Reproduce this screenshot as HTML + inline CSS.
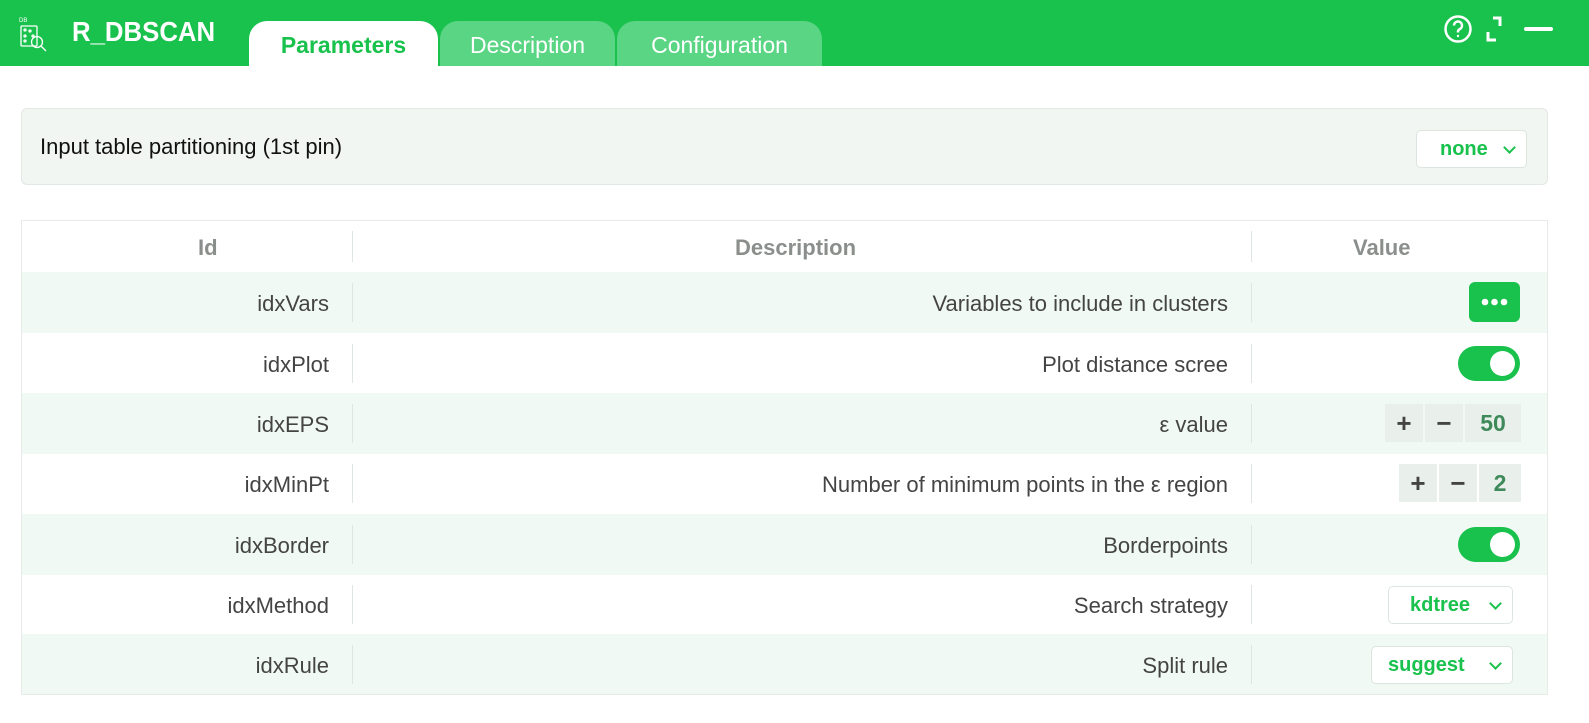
<!DOCTYPE html>
<html><head><meta charset="utf-8"><style>
*{box-sizing:border-box;margin:0;padding:0}
body{width:1589px;height:723px;background:#fff;font-family:"Liberation Sans",sans-serif;position:relative;overflow:hidden}
.top{position:absolute;left:0;top:0;width:1589px;height:66px;background:#19c14d}
.title{position:absolute;left:72px;top:15px;color:#fff;font-weight:bold;font-size:28px;line-height:34px;transform:scaleX(0.92);transform-origin:left}
.tab{position:absolute;top:21px;height:45px;border-radius:18px 18px 0 0;font-size:23px;text-align:center;line-height:48px;color:#fff;background:#5ad584}
.tab.act{background:#fff;color:#19c14d;font-weight:bold}
.box{position:absolute;left:21px;top:108px;width:1527px;height:77px;background:#f2f6f3;border:1px solid #e2e8e4;border-radius:6px}
.box span{position:absolute;left:18px;top:0;line-height:76px;font-size:22px;color:#111}
.sel{position:absolute;background:#fff;border:1px solid #dde5df;border-radius:5px;color:#19c14d;font-weight:bold;font-size:20px;line-height:36px}
.sel i{position:absolute;right:12px;top:12px;width:9px;height:9px;border-right:2px solid #19c14d;border-bottom:2px solid #19c14d;transform:rotate(45deg)}
.tbl{position:absolute;left:21px;top:220px;width:1527px;height:475px;border:1px solid #e6ebe7}
.row{position:absolute;left:0;width:1525px;height:61px;font-size:22px;color:#444;line-height:63px}
.row.g{background:#f1f9f4}
.row .id{position:absolute;right:1218px;top:0}
.row .d{position:absolute;right:319px;top:0}
.sep{position:absolute;top:11px;width:1px;height:39px;background:#dfe5e1}
.hd{color:#8a8f8c;font-weight:bold}
.tog{position:absolute;right:27px;top:13px;width:62px;height:35px;border-radius:18px;background:#19c14d}
.tog:after{content:"";position:absolute;right:5px;top:5px;width:25px;height:25px;border-radius:50%;background:#fff}
.num{position:absolute;top:11px;height:38px;background:#e9efeb;color:#444;font-weight:bold;text-align:center;line-height:38px;font-size:26px}
.num.v{color:#3f8a5a;font-size:23px}
</style></head><body>
<div class="top">
<svg style="position:absolute;left:19px;top:17px" width="30" height="36" viewBox="0 0 30 36" fill="none" stroke="#fff" stroke-width="1.3"><text x="0" y="5" font-size="6" fill="#fff" stroke="none" font-family="Liberation Sans">DB</text><rect x="2" y="9" width="16" height="20" rx="1"/><circle cx="6" cy="13" r="1"/><circle cx="11" cy="14" r="1"/><circle cx="6" cy="19" r="1"/><circle cx="14" cy="19" r="1"/><circle cx="6" cy="24" r="1"/><circle cx="18" cy="25" r="5.5"/><path d="M22 29l5 5"/></svg>
<div class="title">R_DBSCAN</div>
<div class="tab act" style="left:249px;width:189px">Parameters</div>
<div class="tab" style="left:440px;width:175px">Description</div>
<div class="tab" style="left:617px;width:205px">Configuration</div>
<svg style="position:absolute;left:1440px;top:10px" width="120" height="40" viewBox="0 0 120 40" fill="none" stroke="#fff" stroke-width="2.5"><circle cx="18" cy="19" r="12.5"/><path d="M14 15.5a4 4 0 1 1 5.5 3.7c-1 .5-1.5 1.2-1.5 2.3v1"/><circle cx="18" cy="26" r="1.2" fill="#fff" stroke="none"/><path d="M53 8h7v8" stroke-width="3"/><path d="M48 22v8h8" stroke-width="3"/><path d="M86 19h25" stroke-width="4" stroke-linecap="round"/></svg>
</div>
<div class="box"><span>Input table partitioning (1st pin)</span>
<div class="sel" style="left:1394px;top:21px;width:111px;height:38px"><span style="position:absolute;left:23px;top:0;line-height:36px;font-size:20px;color:#19c14d;font-weight:bold">none</span><i></i></div></div>
<div class="tbl">
<div class="row hd" style="top:0;height:51px;line-height:53px"><span style="position:absolute;left:176px">Id</span><div class="sep" style="left:330px;top:10px;height:31px"></div><span style="position:absolute;left:713px">Description</span><div class="sep" style="left:1229px;top:10px;height:31px"></div><span style="position:absolute;left:1331px">Value</span></div>
<div class="row g" style="top:51px"><span class="id">idxVars</span><div class="sep" style="left:330px"></div><span class="d">Variables to include in clusters</span><div class="sep" style="left:1229px"></div><svg style="position:absolute;right:27px;top:10px" width="51" height="40"><rect width="51" height="40" rx="6" fill="#19c14d"/><circle cx="16" cy="20" r="3.3" fill="#fff"/><circle cx="25.5" cy="20" r="3.3" fill="#fff"/><circle cx="35" cy="20" r="3.3" fill="#fff"/></svg></div>
<div class="row" style="top:112px"><span class="id">idxPlot</span><div class="sep" style="left:330px"></div><span class="d">Plot distance scree</span><div class="sep" style="left:1229px"></div><div class="tog"></div></div>
<div class="row g" style="top:172px"><span class="id">idxEPS</span><div class="sep" style="left:330px"></div><span class="d">ε value</span><div class="sep" style="left:1229px"></div><div class="num" style="left:1363px;width:38px">+</div><div class="num" style="left:1403px;width:38px">−</div><div class="num v" style="left:1443px;width:56px">50</div></div>
<div class="row" style="top:232px"><span class="id">idxMinPt</span><div class="sep" style="left:330px"></div><span class="d">Number of minimum points in the ε region</span><div class="sep" style="left:1229px"></div><div class="num" style="left:1377px;width:38px">+</div><div class="num" style="left:1417px;width:38px">−</div><div class="num v" style="left:1457px;width:42px">2</div></div>
<div class="row g" style="top:293px"><span class="id">idxBorder</span><div class="sep" style="left:330px"></div><span class="d">Borderpoints</span><div class="sep" style="left:1229px"></div><div class="tog"></div></div>
<div class="row" style="top:353px"><span class="id">idxMethod</span><div class="sep" style="left:330px"></div><span class="d">Search strategy</span><div class="sep" style="left:1229px"></div><div class="sel" style="left:1366px;top:12px;width:125px;height:38px"><span style="position:absolute;left:21px;top:0">kdtree</span><i></i></div></div>
<div class="row g" style="top:413px;height:60px"><span class="id">idxRule</span><div class="sep" style="left:330px"></div><span class="d">Split rule</span><div class="sep" style="left:1229px"></div><div class="sel" style="left:1349px;top:12px;width:142px;height:38px"><span style="position:absolute;left:16px;top:0">suggest</span><i></i></div></div>
</div>
</body></html>
